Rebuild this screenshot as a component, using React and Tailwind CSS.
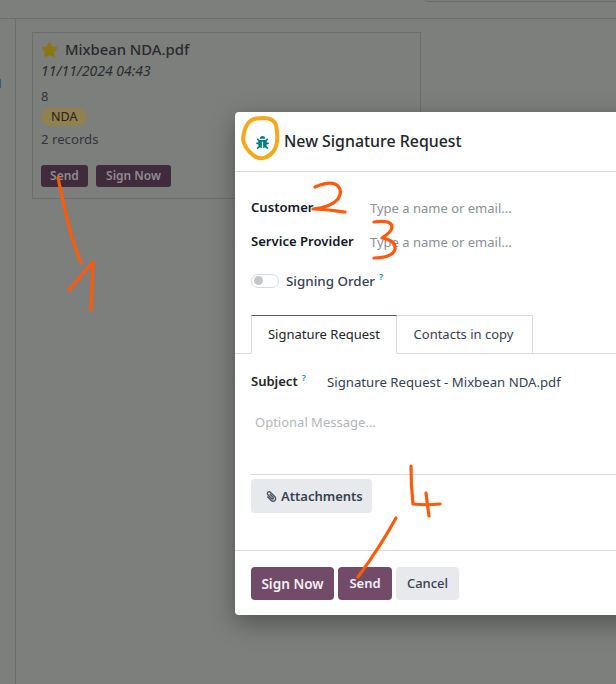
import React from 'react';
import { FaBug, FaStar, FaPaperclip } from 'react-icons/fa';

const font = { fontFamily: '"Noto Sans", sans-serif' };

function Card() {
  return (
    <div className="w-[389px] h-[167px] border border-[#6c6e6c] pl-2 pt-[5px] text-[#2a2b2d]">
      <div className="flex items-center gap-[7px] h-[22px]">
        <FaStar className="text-[17px] text-[#8b7611]" />
        <span className="text-[14.8px] font-medium text-[#282a2e]">Mixbean NDA.pdf</span>
      </div>
      <div className="text-[14px] italic leading-[20px] mt-[1px]">11/11/2024 04:43</div>
      <div className="text-[13px] leading-[18px] mt-[6px] text-[#33343a]">8</div>
      <div className="flex mt-[3px]">
        <span className="rounded-full bg-[#8f8150] px-[10px] text-[12.5px] leading-[18px] text-[#262218]">NDA</span>
      </div>
      <div className="text-[13.2px] leading-[18px] mt-[4px] text-[#33343a]">2 records</div>
      <div className="flex gap-2 mt-[17px]">
        <span className="h-[22px] w-[47px] flex items-center justify-center rounded-[3px] bg-[#3f2b3b] text-[12px] font-semibold text-[#8f8b90]">Send</span>
        <span className="h-[22px] w-[75px] flex items-center justify-center rounded-[3px] bg-[#3f2b3b] text-[12px] font-semibold text-[#8f8b90]">Sign Now</span>
      </div>
    </div>
  );
}

function Modal() {
  return (
    <div className="absolute left-[235px] top-[112px] w-[500px] h-[503px] bg-white rounded-[4px] shadow-[0_8px_24px_rgba(0,0,0,0.35)] flex flex-col">
      <div className="h-[60px] border-b border-[#d8dadd] flex items-center pl-[21px] pt-[1px] shrink-0">
        <FaBug className="text-[13px] text-[#017e84]" />
        <span className="ml-[15px] text-[15.9px] font-medium text-[#212529]">New Signature Request</span>
      </div>

      <div className="flex-1 flex flex-col">
        <div className="pl-4 pt-[25px]">
          <div className="flex h-[34px]">
            <span className="w-[119px] text-[13.1px] font-semibold text-[#111827] leading-[20px]">Customer</span>
            <span className="text-[13px] text-[#8a9098] leading-[22px]">Type a name or email...</span>
          </div>
          <div className="flex h-[34px]">
            <span className="w-[119px] text-[13.1px] font-semibold text-[#111827] leading-[20px]">Service Provider</span>
            <span className="text-[13px] text-[#8a9098] leading-[22px]">Type a name or email...</span>
          </div>
          <div className="flex items-center mt-[5px] h-[22px]">
            <span className="w-[28px] h-[14px] -mt-[1px] rounded-full border border-[#d8dadd] flex items-center pl-[2px]">
              <span className="w-[9px] h-[9px] rounded-full bg-[#c4c6c8]" />
            </span>
            <span className="ml-[7px] text-[13.4px] font-medium text-[#374151]">Signing Order</span>
            <span className="ml-[4px] -mt-[8px] text-[9px] font-semibold text-[#0d8aa8]">?</span>
          </div>
        </div>

        <div className="flex mt-[23px] pl-4 border-b border-[#d8dadd] h-[39px]">
          <div className="w-[146px] h-[39px] pt-[1px] bg-white border border-[#d8dadd] border-b-white border-t-[#714b67] flex items-center justify-center text-[13px] text-[#212529]">Signature Request</div>
          <div className="w-[136px] h-[38px] pt-[1px] pr-[2px] border border-l-0 border-b-0 border-[#d8dadd] flex items-center justify-center text-[13px] text-[#374151]">Contacts in copy</div>
        </div>

        <div className="pl-4 pt-[17px] flex h-[48px]">
          <span className="w-[76px] flex text-[13px] font-semibold text-[#212529] leading-[20px]">
            Subject<span className="ml-[4px] -mt-[3px] text-[9px] text-[#0d8aa8]">?</span>
          </span>
          <span className="text-[13.2px] text-[#374151] leading-[22px]">Signature Request - Mixbean NDA.pdf</span>
        </div>
        <div className="pl-5 pt-[10px] text-[13px] leading-[20px] text-[#b3b6ba]">Optional Message...</div>

        <div className="ml-4 mt-[42px] border-t border-[#d8dadd] pt-[4px]">
          <div className="w-[121px] h-[34px] pt-[1px] rounded-[4px] bg-[#e7e9ed] flex items-center pl-[15px] gap-[4px] text-[13px] font-semibold text-[#374151]">
            <FaPaperclip className="text-[11px] text-[#4b5563] -scale-x-100" />
            Attachments
          </div>
        </div>
      </div>

      <div className="h-[65px] border-t border-[#d8dadd] pl-4 pt-[16px] flex gap-1 shrink-0">
        <span className="h-[33px] w-[83px] pt-[1px] rounded-[4px] bg-[#714b67] flex items-center justify-center text-[13.6px] font-semibold text-[#f4eff3]">Sign Now</span>
        <span className="h-[33px] w-[54px] pt-[1px] rounded-[4px] bg-[#714b67] flex items-center justify-center text-[13px] font-semibold text-[#f4eff3]">Send</span>
        <span className="h-[33px] w-[63px] pt-[1px] rounded-[4px] bg-[#e7e9ed] flex items-center justify-center text-[13px] font-medium text-[#374151]">Cancel</span>
      </div>
    </div>
  );
}

function Scribbles() {
  return (
    <svg className="absolute inset-0 pointer-events-none" width="616" height="684" viewBox="0 0 616 684" fill="none" strokeLinecap="round" strokeLinejoin="round">
      <path d="M243 139C244 129 248 120 256 118.500C266 117 274 118 276 125C278 135 278 147 272 153C266 159 259 160 253 155C248 151 244 146 243 139Z" stroke="#f5a81c" strokeWidth="4" />
      <g stroke="#ff5a0a" strokeWidth="3.2">
        <path d="M58 178C64 205 68 225 73 240C76 250 79 257 81 263" />
        <path d="M69 290L93 262C92 280 92 295 91 310" />
        <path d="M315 187C322 184 330 182 335 184C341 187 342 193 338 199C333 205 323 208 313 209C325 209 335 211 345 212" />
        <path d="M374 222C381 221 388 221 391 224C394 228 390 233 382 238C390 239 396 243 395 249C394 255 385 258 374 258" />
        <path d="M411 466C411 482 412 495 413 504C422 505 431 505 440 504" />
        <path d="M426 493C427 501 428 509 429 516" />
        <path d="M396 518C385 538 372 558 358 577" />
      </g>
    </svg>
  );
}

export default function App() {
  return (
    <div className="relative w-[616px] h-[684px] overflow-hidden bg-[#7d7f7d]" style={font}>
      {/* dimmed page behind the dialog */}
      <div className="h-[19px] border-b border-[#6c6e6c]" />
      <div className="flex">
        <div className="w-[16px] h-[665px] border-r border-[#6c6e6c] relative">
          <span className="absolute left-0 top-[60px] w-[1px] h-[9px] bg-[#2f5f7f]" />
        </div>
        <div className="pl-[16px] pt-[13px]">
          <Card />
        </div>
      </div>
      <div className="absolute left-[425px] -top-[1px] w-[200px] h-[3px] border border-[#6c6e6c] rounded-[2px]" />
      <Modal />
      <Scribbles />
    </div>
  );
}
